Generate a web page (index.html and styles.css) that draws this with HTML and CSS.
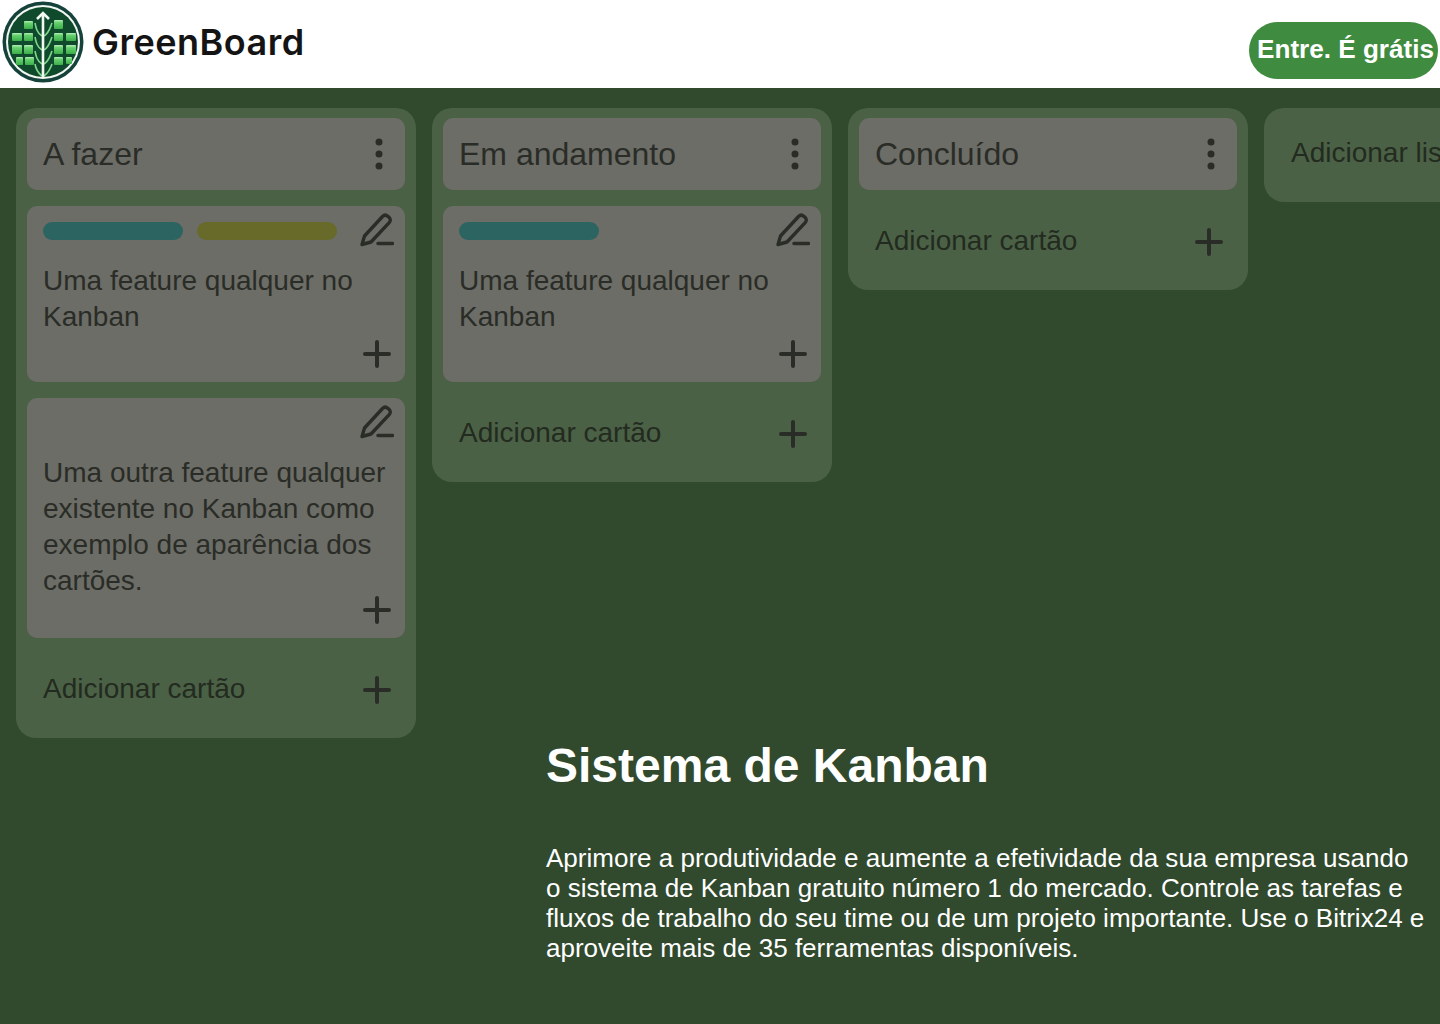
FILE: index.html
```html
<!DOCTYPE html>
<html lang="pt-BR">
<head>
  <meta charset="UTF-8">
  <meta name="viewport" content="width=device-width, initial-scale=1.0">
  <title>GreenBoard</title>
  <link rel="stylesheet" href="styles.css">
</head>
<body>
  <svg class="icon-defs" aria-hidden="true">
    <symbol id="icon-plus" viewBox="0 0 28 28">
      <path d="M14 2V26M2 14H26" fill="none" stroke="currentColor" stroke-width="4" stroke-linecap="round"/>
    </symbol>
    <symbol id="icon-edit" viewBox="0 0 34 34">
      <path d="M2 31.5L4.5 23L22.5 3.5C24 2 26.2 1.8 27.8 3.2L29 4.3C30.6 5.8 30.7 8 29.2 9.6L11 29L2 31.5Z" fill="none" stroke="currentColor" stroke-width="3.4" stroke-linejoin="round"/>
      <path d="M18 30.5H32.5" fill="none" stroke="currentColor" stroke-width="3.4" stroke-linecap="round"/>
    </symbol>
    <symbol id="icon-more" viewBox="0 0 8 32">
      <circle cx="4" cy="4" r="3.5" fill="currentColor"/>
      <circle cx="4" cy="16" r="3.5" fill="currentColor"/>
      <circle cx="4" cy="28" r="3.5" fill="currentColor"/>
    </symbol>
  </svg>

  <header class="topbar">
    <a class="brand" href="#">
      <svg class="brand-logo" viewBox="0 0 84 84" aria-hidden="true">
        <defs>
          <linearGradient id="cell-fill" x1="0" y1="0" x2="0" y2="1">
            <stop offset="0" stop-color="#b5efb8"/>
            <stop offset="0.3" stop-color="#66d06e"/>
            <stop offset="1" stop-color="#3cae4a"/>
          </linearGradient>
        </defs>
        <circle cx="42" cy="42" r="40.5" fill="#15423a"/>
        <circle cx="42" cy="42" r="37" fill="#f2f7f2"/>
        <circle cx="42" cy="42" r="35" fill="#0f4a2c"/>
        <g class="logo-cells">
          <rect x="23" y="21" width="9" height="8" rx="1"/>
          <rect x="53" y="20" width="9" height="9" rx="1"/>
          <rect x="11" y="33" width="10" height="8" rx="1"/>
          <rect x="23" y="33" width="9" height="8" rx="1"/>
          <rect x="53" y="33" width="9" height="8" rx="1"/>
          <rect x="65" y="33" width="10" height="8" rx="1"/>
          <rect x="11" y="45" width="10" height="9" rx="1"/>
          <rect x="23" y="45" width="9" height="9" rx="1"/>
          <rect x="53" y="45" width="9" height="9" rx="1"/>
          <rect x="65" y="45" width="10" height="9" rx="1"/>
          <rect x="15" y="57" width="7" height="8" rx="1"/>
          <rect x="24" y="57" width="9" height="8" rx="1"/>
          <rect x="53" y="57" width="9" height="8" rx="1"/>
          <rect x="65" y="57" width="6" height="7" rx="1"/>
        </g>
        <path class="logo-branch" d="M41 36C36 33 35 28 34 23M43 36C48 33 49 28 51 23M41 50C36 47 35 42 34 37M43 50C48 47 49 42 51 37M41 64C36 61 35 56 34 51M43 64C48 61 49 56 51 51M41 76C37 73 35 70 34 64M43 76C47 73 49 70 51 64"/>
        <path class="logo-stem" d="M42 77V13M36 19L42 13L48 19"/>
      </svg>
      <span class="brand-name">GreenBoard</span>
    </a>
    <a class="signup" href="#">Entre. É grátis</a>
  </header>

  <main>
    <section class="board">
      <div class="list">
        <div class="list-head">
          <h2>A fazer</h2>
          <svg class="icon-more"><use href="#icon-more"/></svg>
        </div>
        <article class="card">
          <div class="card-top">
            <div class="tags">
              <span class="tag tag-teal"></span>
              <span class="tag tag-olive"></span>
            </div>
            <svg class="icon-edit"><use href="#icon-edit"/></svg>
          </div>
          <p>Uma feature qualquer no Kanban</p>
          <div class="card-foot"><svg class="icon-plus"><use href="#icon-plus"/></svg></div>
        </article>
        <article class="card">
          <div class="card-top">
            <div class="tags"></div>
            <svg class="icon-edit"><use href="#icon-edit"/></svg>
          </div>
          <p>Uma outra feature qualquer existente no Kanban como exemplo de aparência dos cartões.</p>
          <div class="card-foot"><svg class="icon-plus"><use href="#icon-plus"/></svg></div>
        </article>
        <div class="add-card">
          <span>Adicionar cartão</span>
          <svg class="icon-plus"><use href="#icon-plus"/></svg>
        </div>
      </div>

      <div class="list">
        <div class="list-head">
          <h2>Em andamento</h2>
          <svg class="icon-more"><use href="#icon-more"/></svg>
        </div>
        <article class="card">
          <div class="card-top">
            <div class="tags">
              <span class="tag tag-teal"></span>
            </div>
            <svg class="icon-edit"><use href="#icon-edit"/></svg>
          </div>
          <p>Uma feature qualquer no Kanban</p>
          <div class="card-foot"><svg class="icon-plus"><use href="#icon-plus"/></svg></div>
        </article>
        <div class="add-card">
          <span>Adicionar cartão</span>
          <svg class="icon-plus"><use href="#icon-plus"/></svg>
        </div>
      </div>

      <div class="list">
        <div class="list-head">
          <h2>Concluído</h2>
          <svg class="icon-more"><use href="#icon-more"/></svg>
        </div>
        <div class="add-card">
          <span>Adicionar cartão</span>
          <svg class="icon-plus"><use href="#icon-plus"/></svg>
        </div>
      </div>

      <div class="add-list">Adicionar lista</div>
    </section>

    <section class="intro">
      <h1>Sistema de Kanban</h1>
      <p>Aprimore a produtividade e aumente a efetividade da sua empresa usando o sistema de Kanban gratuito número 1 do mercado. Controle as tarefas e fluxos de trabalho do seu time ou de um projeto importante. Use o Bitrix24 e aproveite mais de 35 ferramentas disponíveis.</p>
    </section>
  </main>
</body>
</html>
```

FILE: styles.css
```css
body {
  margin: 0;
  font-family: "Liberation Sans", Arial, sans-serif;
  background-color: #31492d;
  color: #2a2c27;
}

.icon-defs {
  display: none;
}

.topbar {
  display: flex;
  justify-content: space-between;
  height: 88px;
  background-color: #ffffff;
}

.brand {
  display: flex;
  align-items: center;
  gap: 7px;
  height: 84px;
  padding-left: 1px;
  color: #141414;
  text-decoration: none;
}

.brand-logo {
  width: 84px;
  height: 84px;
}

.logo-cells rect {
  fill: url(#cell-fill);
}

.logo-branch {
  fill: none;
  stroke: #7fd68a;
  stroke-width: 1.6;
}

.logo-stem {
  fill: none;
  stroke: #f2f7f2;
  stroke-width: 2.6;
}

.brand-name {
  font-family: Inter, sans-serif;
  font-size: 36px;
  font-weight: 600;
  letter-spacing: 0.5px;
}

.signup {
  align-self: flex-start;
  margin: 22px 2px 0 0;
  padding: 0 4px 0 8px;
  height: 57px;
  line-height: 55px;
  border-radius: 29px;
  background-color: #3f8b3f;
  color: #ffffff;
  font-size: 26.1px;
  font-weight: bold;
  text-decoration: none;
}

.board {
  display: flex;
  align-items: flex-start;
  gap: 16px;
  height: 630px;
  padding: 20px 0 0 16px;
  overflow: hidden;
}

.list {
  flex: none;
  width: 378px;
  padding: 10px 11px 12px;
  border-radius: 20px;
  background-color: #4b6145;
}

.list-head {
  display: flex;
  justify-content: space-between;
  align-items: center;
  height: 72px;
  padding: 0 22px 0 16px;
  border-radius: 10px;
  background-color: #6c6d66;
}

.list-head h2 {
  margin: 0;
  font-size: 32px;
  font-weight: normal;
}

.icon-more {
  width: 8px;
  height: 32px;
}

.card {
  display: flex;
  flex-direction: column;
  box-sizing: border-box;
  min-height: 176px;
  margin-top: 16px;
  padding: 0 14px 14px 16px;
  border-radius: 10px;
  background-color: #6c6d66;
}

.card-top {
  display: flex;
  justify-content: space-between;
  height: 50px;
  padding-top: 7px;
}

.tags {
  display: flex;
  gap: 14px;
  margin-top: 9px;
}

.tag {
  width: 140px;
  height: 18px;
  border-radius: 9px;
}

.tag-teal {
  background-color: #2c6461;
}

.tag-olive {
  background-color: #686a2a;
}

.icon-edit {
  width: 34px;
  height: 34px;
  margin-right: -3px;
}

.card p {
  margin: 0 0 -3px;
  font-size: 28px;
  line-height: 36px;
}

.card-foot {
  display: flex;
  justify-content: flex-end;
  margin-top: auto;
}

.icon-plus {
  width: 28px;
  height: 28px;
}

.add-card {
  display: flex;
  justify-content: space-between;
  align-items: center;
  height: 72px;
  margin-top: 16px;
  padding: 0 14px 0 16px;
  font-size: 28px;
}

.add-card span {
  margin-bottom: 2px;
  color: #232b20;
}

.add-list {
  flex: none;
  width: 373px;
  height: 94px;
  padding-left: 27px;
  border-radius: 20px;
  background-color: #4b6145;
  color: #232b20;
  font-size: 28px;
  line-height: 90px;
}

.intro {
  width: 880px;
  margin-left: 546px;
  color: #ffffff;
}

.intro h1 {
  margin: 0 0 49px;
  font-size: 48px;
  line-height: 56px;
}

.intro p {
  margin: 0;
  font-size: 26.04px;
  line-height: 30px;
}
```
